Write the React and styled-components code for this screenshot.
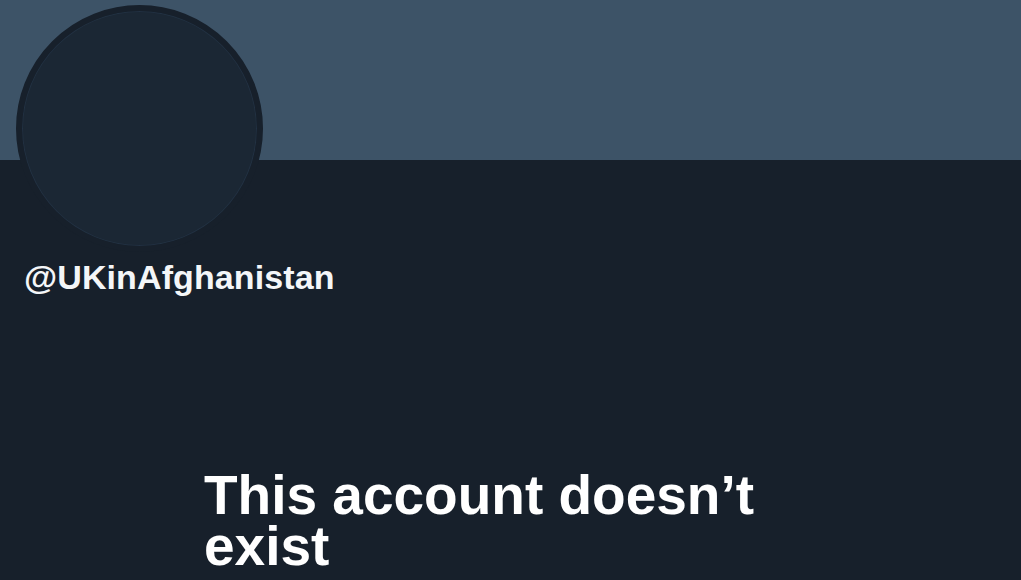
import React from 'react'
import styled, { createGlobalStyle } from 'styled-components'

const GlobalStyle = createGlobalStyle`
  html, body {
    margin: 0;
    padding: 0;
    background: #17202b;
  }
  body {
    font-family: "Liberation Sans", Arial, sans-serif;
  }
`

function App() {
  return (
    <>
      <GlobalStyle />
      <Page>
        <Banner />
        <ProfileHead>
          <AvatarRow>
            <Avatar />
          </AvatarRow>
          <Handle>@UKinAfghanistan</Handle>
        </ProfileHead>
        <Notice>
          <Title>This account doesn’t exist</Title>
        </Notice>
      </Page>
    </>
  )
}

export default App

const Page = styled.div`
  width: 1021px;
  height: 580px;
  overflow: hidden;
  background: #17202b;
  display: flex;
  flex-direction: column;
`

const Banner = styled.div`
  height: 160px;
  flex-shrink: 0;
  background: #3d5367;
`

const ProfileHead = styled.div`
  padding: 0 0 0 16px;
  display: flex;
  flex-direction: column;
`

const AvatarRow = styled.div`
  height: 92px;
  position: relative;
`

const Avatar = styled.div`
  position: absolute;
  left: 0;
  bottom: 0;
  width: 235px;
  height: 235px;
  border-radius: 50%;
  border: 6px solid #17202b;
  background: #1b2734;
  box-shadow: inset 0 0 0 1px #223142;
`

const Handle = styled.div`
  margin: 5px 0 0 8px;
  color: #f4f6f8;
  font-weight: 700;
  font-size: 34px;
  line-height: 40px;
  letter-spacing: 0.1px;
`

const Notice = styled.div`
  padding: 173px 0 0 204px;
`

const Title = styled.h1`
  margin: 0;
  width: 560px;
  color: #ffffff;
  font-weight: 700;
  font-size: 55px;
  line-height: 51px;
`
